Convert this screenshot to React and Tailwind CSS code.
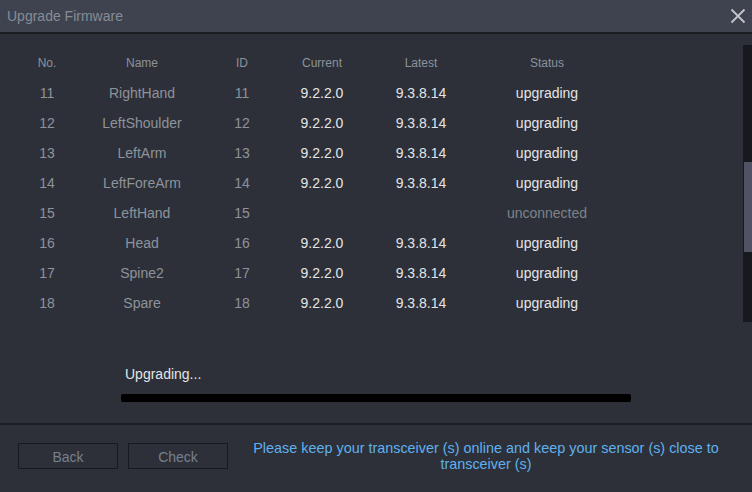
import React from 'react';

const ROWS = [
    { no: 11, name: 'RightHand', id: 11, current: '9.2.2.0', latest: '9.3.8.14', status: 'upgrading' },
    { no: 12, name: 'LeftShoulder', id: 12, current: '9.2.2.0', latest: '9.3.8.14', status: 'upgrading' },
    { no: 13, name: 'LeftArm', id: 13, current: '9.2.2.0', latest: '9.3.8.14', status: 'upgrading' },
    { no: 14, name: 'LeftForeArm', id: 14, current: '9.2.2.0', latest: '9.3.8.14', status: 'upgrading' },
    { no: 15, name: 'LeftHand', id: 15, current: '', latest: '', status: 'unconnected' },
    { no: 16, name: 'Head', id: 16, current: '9.2.2.0', latest: '9.3.8.14', status: 'upgrading' },
    { no: 17, name: 'Spine2', id: 17, current: '9.2.2.0', latest: '9.3.8.14', status: 'upgrading' },
    { no: 18, name: 'Spare', id: 18, current: '9.2.2.0', latest: '9.3.8.14', status: 'upgrading' },
];

const cols = 'grid grid-cols-[60px_130px_70px_90px_108px_144px] text-center items-center';

export default function App() {
    return (
        <div className="w-[752px] h-[492px] flex flex-col bg-[#2d3038] overflow-hidden" style={{ fontFamily: '"Liberation Sans", Arial, sans-serif' }}>
            {/* title bar */}
            <div className="h-[34px] shrink-0 flex items-center justify-between bg-[#3f434f] border-b-2 border-[#1b1d22] pl-[7px] pr-[6px]">
                <span className="text-[14px] text-[#858c97]">Upgrade Firmware</span>
                <svg width="16" height="16" viewBox="0 0 16 16" className="mb-[1px]">
                    <path d="M1.5 1.5 L14.5 14.5 M14.5 1.5 L1.5 14.5" stroke="#c4c6ca" strokeWidth="1.8" />
                </svg>
            </div>

            {/* table + scrollbar */}
            <div className="h-[288px] shrink-0 flex">
                <div className="flex-1 pt-[13px] pl-[17px]">
                    <div className={`${cols} h-[31px] text-[12px] text-[#8c929b]`}>
                        <span>No.</span>
                        <span>Name</span>
                        <span>ID</span>
                        <span>Current</span>
                        <span>Latest</span>
                        <span>Status</span>
                    </div>
                    {ROWS.map(r => (
                        <div key={r.no} className={`${cols} h-[30px] text-[14px]`}>
                            <span className="text-[#8e939b]">{r.no}</span>
                            <span className="text-[#8e939b]">{r.name}</span>
                            <span className="text-[#8e939b]">{r.id}</span>
                            <span className="text-[#e4e5e7]">{r.current}</span>
                            <span className="text-[#e4e5e7]">{r.latest}</span>
                            <span className={r.status === 'unconnected' ? 'text-[#7e838b]' : 'text-[#e4e5e7]'}>{r.status}</span>
                        </div>
                    ))}
                </div>
                <div className="w-[9px] mt-[11px] h-[277px] bg-[#17191e] pt-[117px] pl-[1px]">
                    <div className="h-[90px] bg-[#4f5364]" />
                </div>
            </div>

            {/* progress */}
            <div className="flex-1 pl-[121px] pt-[44px]">
                <div className="pl-[4px] text-[14px] leading-[16px] text-[#e4e5e7]">Upgrading...</div>
                <div className="mt-[12px] w-[510px] h-[8px] rounded-[2px] bg-black" />
            </div>

            {/* footer */}
            <div className="h-[69px] shrink-0 border-t-2 border-[#1b1d22] flex items-start pt-[18px] pl-[18px] pr-[18px]">
                <button className="w-[100px] h-[26px] pt-[2px] border border-[#17191e] text-[14px] text-[#78808c]">Back</button>
                <button className="ml-[10px] w-[100px] h-[26px] pt-[2px] border border-[#17191e] text-[14px] text-[#78808c]">Check</button>
                <p className="flex-1 ml-[10px] -mt-[3px] text-center text-[14.4px] leading-[16px] text-[#5fb1ee]">
                    Please keep your transceiver (s) online and keep your sensor (s) close to transceiver (s)
                </p>
            </div>
        </div>
    );
}
